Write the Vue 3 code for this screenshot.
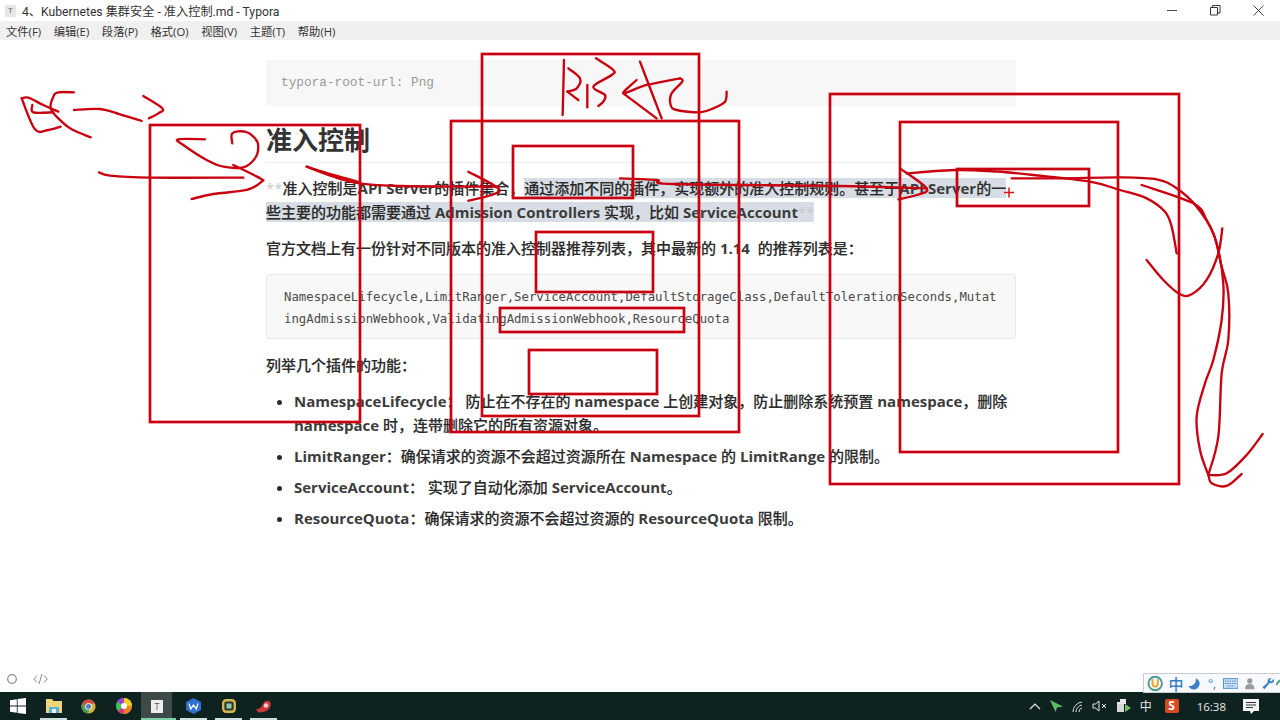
<script setup>
const menus = ['文件(F)', '编辑(E)', '段落(P)', '格式(O)', '视图(V)', '主题(T)', '帮助(H)']

const toPath = (raw) => {
  // smooth the hand drawn strokes a bit (catmull-rom)
  const p = raw.trim().split(/\s+/).map((s) => s.split(',').map(Number))
  let d = `M${p[0][0]} ${p[0][1]}`
  for (let i = 0; i < p.length - 1; i++) {
    const a = p[i - 1] || p[i]
    const b = p[i]
    const c = p[i + 1]
    const e = p[i + 2] || c
    d += ` C${b[0] + (c[0] - a[0]) / 6} ${b[1] + (c[1] - a[1]) / 6} ${c[0] - (e[0] - b[0]) / 6} ${c[1] - (e[1] - b[1]) / 6} ${c[0]} ${c[1]}`
  }
  return d
}

const boxes = [
  [150, 125, 210, 297],
  [482, 54, 217, 362],
  [451, 121, 288, 311],
  [513, 146, 120, 52],
  [536, 232, 117, 60],
  [500, 308, 184, 24],
  [529, 350, 128, 44],
  [830, 94, 349, 390],
  [900, 122, 218, 330],
  [957, 169, 132, 37],
]

// strokes in 3x coordinates, grouped by their origin
const groups = [
  {
    origin: [0, 50],
    lines: [
      '65,145 85,143 130,165 175,185',
      '65,145 105,238 145,240 182,230',
      '97,165 100,187 160,187',
      '222,127 175,127 160,140 152,175 175,205 215,238 272,262',
      '222,180 300,177 360,193 425,213',
      '430,138 487,175 475,190 447,205',
      '615,268 535,268 550,285 620,330 670,350 730,352 765,325 775,290 765,265 735,245 697,250 697,280',
      '700,345 780,385 785,395 740,420 640,432 575,447',
      '297,367 330,377 450,383 730,383',
      '920,350 1000,375 1080,397',
    ],
  },
  {
    origin: [250, 160],
    lines: [
      '170,20 250,50 330,70 450,78 745,80',
      '655,35 745,85 725,105 655,122',
    ],
  },
  {
    origin: [480, 50],
    lines: [
      '252,30 248,195',
      '262,125 295,150',
      '265,55 300,85 290,115 262,125',
      '322,105 322,172',
      '348,25 400,60 395,75 340,110 375,135 370,155 355,168',
      '480,35 545,205',
      '600,85 500,105 430,130 470,90',
      '430,130 530,205',
      '600,85 607,95 575,130 572,165 590,180 660,187 700,175 735,155 740,125',
    ],
  },
  {
    origin: [640, 160],
    lines: [
      '-60,55 50,60 100,72 590,78 860,85',
      '780,25 860,85 830,105 775,118',
      '800,40 950,30 1080,35',
    ],
  },
  {
    origin: [1000, 160],
    lines: [
      '0,35 100,45 270,65 360,90 440,115 495,155 515,200 530,280',
      '35,55 180,55 360,52 470,58 530,85 590,140 640,220 665,320 685,400 685,540 665,640 655,830 625,945',
      '425,75 580,130 620,180 650,250 670,370 665,480 640,600 615,670 590,770 600,870 625,945 635,970 680,978 725,942',
      '440,300 490,360 540,403 575,403 620,360 655,280 667,205',
      '625,945 680,940 740,885 788,822',
    ],
  },
].map((g) => ({ ...g, paths: g.lines.map(toPath) }))
</script>

<template>
  <div class="screen">
    <header class="titlebar">
      <span class="app-icon">T</span>
      <span class="title">4、Kubernetes 集群安全 - 准入控制.md - Typora</span>
      <div class="controls">
        <svg width="11" height="11" viewBox="0 0 11 11"><path d="M0 5.500h10" stroke="#444" fill="none" /></svg>
        <svg width="11" height="11" viewBox="0 0 11 11"><path d="M.5 2.500h7v7.500h-7zM2.500 2.500v-2h7.500v7.500h-2" stroke="#333" fill="none" /></svg>
        <svg width="11" height="11" viewBox="0 0 11 11"><path d="M.5.5l10 10M10.500.5l-10 10" stroke="#444" fill="none" /></svg>
      </div>
    </header>
    <nav class="menubar">
      <span v-for="m in menus" :key="m">{{ m }}</span>
    </nav>

    <main class="editor">
      <article class="doc">
        <pre class="front">typora-root-url: Png</pre>
        <h1>准入控制</h1>
        <p class="first"><span class="marks">**</span>准入控制是<b>API Server</b>的插件集合，<mark>通过添加不同的插件，实现额外的准入控制规则。甚至于<b>API Server</b>的一些主要的功能都需要通过 <b>Admission Controllers</b> 实现，比如 <b>ServiceAccount</b><span class="marks">**</span></mark></p>
        <p class="second">官方文档上有一份针对不同版本的准入控制器推荐列表，其中最新的 <b>1.14</b>&nbsp; 的推荐列表是：</p>
        <pre class="code">NamespaceLifecycle,LimitRanger,ServiceAccount,DefaultStorageClass,DefaultTolerationSeconds,Mutat
ingAdmissionWebhook,ValidatingAdmissionWebhook,ResourceQuota</pre>
        <p class="third">列举几个插件的功能：</p>
        <ul>
          <li><b>NamespaceLifecycle</b>： 防止在不存在的 <b>namespace</b> 上创建对象，防止删除系统预置 <b>namespace</b>，删除 <b>namespace</b> 时，连带删除它的所有资源对象。</li>
          <li><b>LimitRanger</b>：确保请求的资源不会超过资源所在 <b>Namespace</b> 的 <b>LimitRange</b> 的限制。</li>
          <li><b>ServiceAccount</b>： 实现了自动化添加 <b>ServiceAccount</b>。</li>
          <li><b>ResourceQuota</b>：确保请求的资源不会超过资源的 <b>ResourceQuota</b> 限制。</li>
        </ul>
      </article>
      <footer class="status">
        <svg width="12" height="12" viewBox="0 0 12 12"><circle cx="6" cy="6" r="4.300" fill="none" stroke="#888" stroke-width="1.200" /></svg>
        <svg width="15" height="12" viewBox="0 0 15 12"><path d="M4 2.500L.8 6 4 9.500M11 2.500L14.200 6 11 9.500M9 1L6 11" fill="none" stroke="#888" /></svg>
      </footer>
      <div class="ime">
        <svg width="17" height="17" viewBox="0 0 17 17"><circle cx="8.500" cy="8.500" r="7" fill="none" stroke="#4d9a94" stroke-width="2" /><path d="M5.800 4v5a2.700 2.700 0 0 0 5.400 0V4" fill="none" stroke="#f0a020" stroke-width="2" /></svg>
        <span class="ime-zh">中</span>
        <svg width="12" height="13" viewBox="0 0 12 13"><path d="M8 1a6 6 0 1 1-7.500 8a6.500 6.500 0 0 0 7.500-8z" fill="#3a80c8" /></svg>
        <span class="ime-dot">°,</span>
        <svg width="16" height="11" viewBox="0 0 16 11"><rect x=".5" y=".5" width="15" height="10" fill="#cfe2f5" stroke="#4a8ccc" /><path d="M2 3h12M2 5.500h12M4 8h8" stroke="#3a80c8" stroke-dasharray="1.500 1" /></svg>
        <svg class="ime-gap" width="10" height="13" viewBox="0 0 11 13"><circle cx="5.500" cy="3.500" r="3" fill="#9a9a9a" /><path d="M0 13c0-4 2-6 5.500-6s5.500 2 5.500 6z" fill="#9a9a9a" /></svg>
        <svg class="ime-gap" width="13" height="13" viewBox="0 0 13 13"><path d="M12.500 1.500a3.500 3.500 0 0 1-4.500 4.500L2.500 12.500 .5 10.500 6 5.500A3.500 3.500 0 0 1 10 .8L8 3l1.500 1.500z" fill="#3a80c8" /></svg>
        <svg class="ime-leaf" width="4" height="13" viewBox="0 0 4 13"><path d="M0 8L4 3" stroke="#4d9a94" stroke-width="2" /></svg>
      </div>

      <svg class="ink" width="1280" height="720" viewBox="0 0 1280 720">
        <rect v-for="(b, i) in boxes" :key="i" :x="b[0]" :y="b[1]" :width="b[2]" :height="b[3]" />
        <g v-for="g in groups" :key="g.origin[0]" :transform="`translate(${g.origin[0]} ${g.origin[1]}) scale(0.3333)`">
          <path v-for="d in g.paths" :key="d" :d="d" class="stroke" />
        </g>
        <path d="M1004 192.500h10M1009 187.500v10" class="plus" />
      </svg>
    </main>

    <footer class="taskbar">
      <div class="start">
        <svg width="16" height="16" viewBox="0 0 16 16"><path d="M0 2.200l6.800-1v6.400H0zM7.600 1.100L16 0v7.600H7.600zM0 8.400h6.800v6.400l-6.800-1zM7.600 8.400H16V16l-8.400-1.100z" fill="#fff" /></svg>
      </div>
      <div class="task used">
        <svg width="16" height="14" viewBox="0 0 16 14"><path d="M0 0h6l1.500 2H16v12H0z" fill="#f0d67a" /><path d="M3 8h10v6H3z" fill="#5ab4d8" /><path d="M6 10h4v4H6z" fill="#e8f4fa" /></svg>
      </div>
      <div class="task">
        <svg width="15" height="15" viewBox="0 0 16 16"><circle cx="8" cy="8" r="7.500" fill="#d8b13a" /><path d="M8 .5A7.500 7.500 0 0 0 1.500 4.300L4.800 9.500 8 5h6.500A7.500 7.500 0 0 0 8 .5z" fill="#d24b3c" /><path d="M1.500 4.300A7.500 7.500 0 0 0 7 15.400l3-5.200-5 .5z" fill="#4a9b55" /><circle cx="8" cy="8" r="3.300" fill="#4a80c8" stroke="#fff" /></svg>
      </div>
      <div class="task">
        <svg width="16" height="16" viewBox="0 0 16 16"><circle cx="8" cy="8" r="8" fill="#3ec45a" /><path d="M8 0a8 8 0 0 1 8 8H8z" fill="#f0d020" /><path d="M8 8h8a8 8 0 0 1-8 8z" fill="#f08020" /><path d="M8 8v8a8 8 0 0 1-6-3z" fill="#e03080" /><path d="M8 0a8 8 0 0 0-7 4l7 4z" fill="#a040d0" /><circle cx="8" cy="8" r="3" fill="#fff" /></svg>
      </div>
      <div class="task active">
        <span class="t-icon">T</span>
      </div>
      <div class="task used">
        <svg width="15" height="16" viewBox="0 0 15 16"><path d="M7.500 0L15 4v8l-7.500 4L0 12V4z" fill="#2f6fd0" /><path d="M3 5.500l1.800 5.500 2.700-4 2.700 4L12 5.500" fill="none" stroke="#fff" stroke-width="1.300" /></svg>
      </div>
      <div class="task used">
        <svg width="14" height="14" viewBox="0 0 14 14"><rect x="1.200" y="1.200" width="11.600" height="11.600" rx="3" fill="#2a3a30" stroke="#d8b84a" stroke-width="2.400" /><rect x="4.500" y="4.500" width="5" height="5" fill="#8fc8b8" /></svg>
      </div>
      <div class="task used">
        <svg width="15" height="13" viewBox="0 0 15 13"><path d="M0 9c3 .5 5-1 7-5 1-3 4-4 6-3s2.500 5 0 8-9 4-11 3z" fill="#c9383a" /><circle cx="10" cy="5.500" r="2.300" fill="#f2c9c9" /></svg>
      </div>
      <div class="tray">
        <svg width="12" height="7" viewBox="0 0 12 7"><path d="M1 6l5-5 5 5" fill="none" stroke="#e8e8e8" stroke-width="1.200" /></svg>
        <svg width="13" height="12" viewBox="0 0 13 12"><path d="M0 0l13 6.500-6 1-1.500 4.500z" fill="#5fbb62" /></svg>
        <svg width="13" height="12" viewBox="0 0 13 12"><path d="M1 12a10 10 0 0 1 9-10M4 12a7 7 0 0 1 6-7M7 12a4 4 0 0 1 3-4" fill="none" stroke="#d8d8d8" /></svg>
        <svg class="sound" width="16" height="12" viewBox="0 0 16 12"><path d="M1 4h2.500L7 1v10L3.500 8H1zM10 4l4 4M14 4l-4 4" fill="none" stroke="#e8e8e8" /></svg>
        <svg width="14" height="14" viewBox="0 0 14 14"><path d="M0 3h3V0h6v5H0z" fill="#e8e8e8" /><path d="M0 5h7v8H0z" fill="#d8d8d8" /><path d="M8 5l6 4-6 4z" fill="#6fc25f" /></svg>
        <span class="tray-zh">中</span>
        <span class="sogou">S</span>
        <span class="clock">16:38</span>
        <svg width="16" height="15" viewBox="0 0 16 15"><path d="M0 0h16v12h-5l-3 3-1-3H0z" fill="#f2f2f2" /><path d="M3 3.500h10M3 6h10M3 8.500h7" stroke="#333" /></svg>
      </div>
    </footer>
  </div>
</template>

<style>
html, body { margin: 0; background: #fff; }
</style>

<style scoped>
.screen {
  position: relative;
  width: 1280px;
  height: 720px;
  display: flex;
  flex-direction: column;
  overflow: hidden;
  background: #fff;
  font-family: "Open Sans", "Noto Sans CJK SC", sans-serif;
  color: #333;
}

.titlebar {
  height: 21px;
  display: flex;
  align-items: center;
  padding-left: 5px;
  font-family: Roboto, "Noto Sans CJK SC", sans-serif;
  font-size: 12.200px;
}
.app-icon {
  width: 11px;
  height: 12px;
  background: #e6e6e6;
  color: #666;
  font-size: 8px;
  line-height: 12px;
  text-align: center;
  margin-right: 6px;
}
.title { color: #333; }
.controls {
  margin-left: auto;
  display: flex;
  gap: 32px;
  padding-right: 16px;
}

.menubar {
  height: 19px;
  background: #f0f0f0;
  display: flex;
  gap: 12.600px;
  align-items: center;
  padding-left: 6px;
  font-size: 11.300px;
  color: #333;
}

.editor {
  flex: 1;
  display: flex;
  flex-direction: column;
}

.doc {
  width: 750px;
  margin: 20px 0 0 266px;
  flex: 1;
  font-size: 15px;
  font-weight: 500;
  line-height: 24px;
  color: #2b2b2b;
  -webkit-text-stroke: 0.15px #2b2b2b;
}
.doc b { font-weight: 700; -webkit-text-stroke: 0; color: #3c3c3c; }
.front {
  margin: 0;
  height: 46px;
  background: #f7f7f7;
  padding-left: 15px;
  font: 400 12.750px/46px "Liberation Mono", monospace;
  color: #999;
  -webkit-text-stroke: 0;
}
h1 {
  margin: 18px 0 0;
  height: 38px;
  font-size: 26px;
  font-weight: 700;
  line-height: 32px;
  color: #333;
  border-bottom: 1px solid #eee;
  -webkit-text-stroke: 0;
}
p { margin: 0; }
.first { margin-top: 13px; }
.second { margin-top: 12px; }
.third { margin-top: 14px; }
.marks { color: #c6cace; -webkit-text-stroke: 0; }
mark {
  background: #d6dde4;
  color: inherit;
}
.code {
  margin: 14px 0 0;
  padding: 11px 17px;
  height: 65px;
  box-sizing: border-box;
  background: #f8f8f8;
  border: 1px solid #e7eaed;
  border-radius: 3px;
  font: 400 12.330px/22px "DejaVu Sans Mono", monospace;
  color: #4a4a4a;
  -webkit-text-stroke: 0;
}
ul {
  margin: 12px 0 0;
  padding-left: 28px;
}
li {
  margin-bottom: 7px;
}

.status {
  height: 28px;
  display: flex;
  align-items: center;
  gap: 15px;
  padding: 1px 0 0 6px;
  box-sizing: border-box;
}

.ime {
  position: absolute;
  left: 1143px;
  top: 673px;
  width: 137px;
  height: 20px;
  box-sizing: border-box;
  display: flex;
  align-items: center;
  gap: 5px;
  padding-left: 3px;
  background: #f7f9fc;
  border: 1px solid #c8ccd0;
  border-right: 0;
  overflow: hidden;
}
.ime-zh {
  font-size: 15px;
  font-weight: 500;
  color: #3a80c8;
}
.ime-dot {
  width: 10px;
  margin-left: 3px;
  font-size: 12px;
  color: #3a80c8;
}
.ime-gap { margin-left: 2px; }
.ime-leaf { margin-left: -3px; }

.ink {
  position: absolute;
  left: 0;
  top: 0;
  pointer-events: none;
}
.ink rect {
  fill: none;
  stroke: #c8000f;
  stroke-width: 2.700;
}
.stroke {
  fill: none;
  stroke: #c8000f;
  stroke-width: 7;
  stroke-linecap: round;
  stroke-linejoin: round;
}
.plus {
  fill: none;
  stroke: #e0101a;
  stroke-width: 1.500;
}

.taskbar {
  height: 28px;
  display: flex;
  align-items: stretch;
  background: #0e2320;
}
.start {
  width: 36px;
  display: flex;
  align-items: center;
  justify-content: center;
}
.task {
  width: 35px;
  display: flex;
  align-items: center;
  justify-content: center;
}
.task.used {
  background: linear-gradient(#cfe0dc, #cfe0dc) center bottom / 27px 2px no-repeat;
}
.task.active {
  background: linear-gradient(#7fd0a8, #7fd0a8) center bottom / 100% 2px no-repeat, linear-gradient(90deg, #3d4a47 88%, #0e2320 88%);
}
.t-icon {
  width: 12px;
  height: 13px;
  margin-right: 3px;
  background: #eee;
  color: #555;
  font-size: 9px;
  line-height: 13px;
  text-align: center;
}
.tray {
  margin-left: auto;
  display: flex;
  align-items: center;
  color: #e8e8e8;
  gap: 9px;
  padding-right: 21px;
}
.sound { margin-left: -2px; }
.tray-zh { font-size: 12px; }
.sogou {
  width: 14px;
  height: 14px;
  margin-left: 4px;
  background: #d84a20;
  color: #fff;
  font-size: 12px;
  font-weight: 700;
  line-height: 14px;
  text-align: center;
  border-radius: 2px;
}
.clock {
  font-size: 11.500px;
  margin-left: 9px;
  margin-right: 8px;
}
</style>
